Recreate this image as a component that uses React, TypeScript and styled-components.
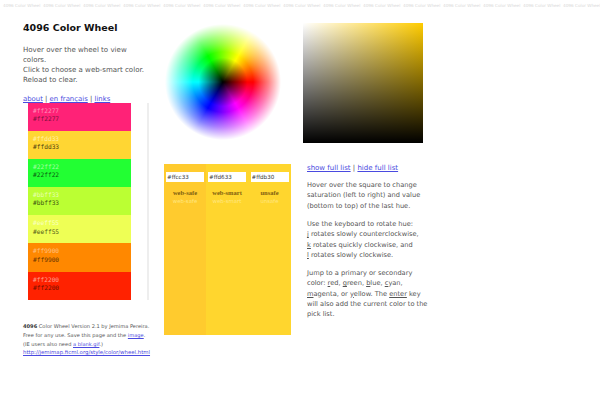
import styled, {createGlobalStyle} from 'styled-components';

const GlobalStyle = createGlobalStyle`
  html, body {
    margin: 0;
    padding: 0;
    background: #fff;
    font-family: 'DejaVu Sans', Verdana, sans-serif;
    color: #555;
  }
`;

const swatches = [
  {hex: '#ff2277', bg: '#ff2277', light: '#ff8fbb', dark: '#7a0f3a'},
  {hex: '#ffdd33', bg: '#ffd633', light: '#fff0a8', dark: '#4d4010'},
  {hex: '#22ff22', bg: '#22ff33', light: '#a0ffa0', dark: '#0a5c10'},
  {hex: '#bbff33', bg: '#bbff33', light: '#e8ffb0', dark: '#3a5510'},
  {hex: '#eeff55', bg: '#eeff55', light: '#f9ffc0', dark: '#55601a'},
  {hex: '#ff9900', bg: '#ff8800', light: '#ffc080', dark: '#663300'},
  {hex: '#ff2200', bg: '#ff2200', light: '#ffa090', dark: '#701000'},
];

const picks = [
  {value: '#ffcc33', title: 'web-safe', sub: 'web-safe', bg: '#ffcb2e', width: 42},
  {value: '#ffd633', title: 'web-smart', sub: 'web-smart', bg: '#ffd62e', width: 42},
  {value: '#ffdb30', title: 'unsafe', sub: 'unsafe', bg: '#ffd62e', width: 43},
];

const App = () => {
  return (
    <>
      <GlobalStyle />
      <Page>
        <Strip>
          {Array.from({length: 15}).map((_, i) => (
            <StripItem key={i}>4096 Color Wheel</StripItem>
          ))}
        </Strip>
        <Columns>
          <LeftCol>
            <Title>4096 Color Wheel</Title>
            <Intro>
              Hover over the wheel to view colors.
              <br />
              Click to choose a web-smart color.
              <br />
              Reload to clear.
            </Intro>
            <NavLinks>
              <a href="#a">about</a> | <a href="#b">en français</a> | <a href="#c">links</a>
            </NavLinks>
            <SwatchRow>
              <SwatchList>
                {swatches.map(s => (
                  <Swatch key={s.hex} $bg={s.bg}>
                    <SwatchText $color={s.light}>{s.hex}</SwatchText>
                    <SwatchText $color={s.dark}>{s.hex}</SwatchText>
                  </Swatch>
                ))}
              </SwatchList>
              <Rule />
            </SwatchRow>
            <Credits>
              <strong>4096</strong> Color Wheel Version 2.1 by Jemima Pereira.
              <br />
              Free for any use. Save this page and the <a href="#d">image</a>.
              <br />
              (IE users also need <a href="#e">a blank.gif</a>.)
              <br />
              <UrlLink href="#f">http://jemimap.ficml.org/style/color/wheel.html</UrlLink>
            </Credits>
          </LeftCol>
          <MiddleCol>
            <Wheel />
            <PickPanel>
              {picks.map(p => (
                <PickColumn key={p.value} $bg={p.bg} $width={p.width}>
                  <PickInput readOnly value={p.value} />
                  <PickTitle>{p.title}</PickTitle>
                  <PickSub>{p.sub}</PickSub>
                </PickColumn>
              ))}
            </PickPanel>
          </MiddleCol>
          <RightCol>
            <SatSquare />
            <Notes>
              <NoteLinks>
                <a href="#g">show full list</a> | <a href="#h">hide full list</a>
              </NoteLinks>
              <p>
                Hover over the square to change saturation (left to right) and value
                (bottom to top) of the last hue.
              </p>
              <p>
                Use the keyboard to rotate hue:
                <br />
                <u>j</u> rotates slowly counterclockwise,
                <br />
                <u>k</u> rotates quickly clockwise, and
                <br />
                <u>l</u> rotates slowly clockwise.
              </p>
              <p>
                Jump to a primary or secondary
                <br />
                color: <u>r</u>ed, <u>g</u>reen, <u>b</u>lue, <u>c</u>yan,
                <br />
                <u>m</u>agenta, or <u>y</u>ellow. The <u>enter</u> key
                <br />
                will also add the current color to the
                <br />
                pick list.
              </p>
            </Notes>
          </RightCol>
        </Columns>
      </Page>
    </>
  );
};

const Page = styled.div`
  width: 600px;
  height: 415px;
  overflow: hidden;
`;
const Strip = styled.div`
  display: flex;
  padding: 3px 0 0 3px;
  height: 9px;
  overflow: hidden;
  white-space: nowrap;
  font-size: 4.2px;
  line-height: 5px;
  color: #d8d8d8;
`;
const StripItem = styled.span`
  flex: none;
  width: 40px;
`;
const Columns = styled.div`
  display: flex;
  align-items: flex-start;
`;
const LeftCol = styled.div`
  width: 141px;
  margin-left: 23px;
  padding-top: 9px;
  flex: none;
  a {
    color: #4a4ae0;
  }
`;
const Title = styled.h1`
  margin: 0;
  font-size: 9.5px;
  line-height: 14px;
  font-weight: 700;
  color: #111;
`;
const Intro = styled.p`
  margin: 10px 0 0;
  width: 122px;
  font-size: 7.05px;
  line-height: 10px;
`;
const NavLinks = styled.div`
  margin-top: 9px;
  font-size: 6.9px;
  line-height: 10px;
`;
const SwatchRow = styled.div`
  display: flex;
  margin-left: 5px;
  margin-top: -1px;
`;
const SwatchList = styled.div`
  width: 103px;
  display: flex;
  flex-direction: column;
`;
const Swatch = styled.div<{$bg: string}>`
  height: 28.1px;
  box-sizing: border-box;
  padding: 4px 5px 0;
  background: ${p => p.$bg};
`;
const SwatchText = styled.div<{$color: string}>`
  font-family: 'DejaVu Sans Mono', monospace;
  font-size: 6.2px;
  line-height: 8.2px;
  color: ${p => p.$color};
`;
const Rule = styled.div`
  width: 2px;
  margin-left: 16px;
  background: #eee;
`;
const Credits = styled.div`
  margin-top: 22.7px;
  font-size: 5.1px;
  line-height: 8.7px;
  white-space: nowrap;
  strong {
    color: #333;
  }
`;
const UrlLink = styled.a`
  font-size: 5.4px;
`;
const MiddleCol = styled.div`
  width: 139px;
  flex: none;
`;
const Wheel = styled.div`
  width: 116px;
  height: 116px;
  margin: 12px 0 0 1px;
  border-radius: 50%;
  background:
    radial-gradient(closest-side, #000 0%, rgba(0, 0, 0, 0.6) 16%, rgba(0, 0, 0, 0) 42%, rgba(255, 255, 255, 0) 52%, rgba(255, 255, 255, 0.5) 78%, #fff 100%),
    conic-gradient(from 90deg, #f00, #f0f, #00f, #0ff, #0f0, #ff0, #f00);
`;
const PickPanel = styled.div`
  display: flex;
  margin: 24px 0 0 0;
  width: 127px;
  height: 171px;
`;
const PickColumn = styled.div<{$bg: string; $width: number}>`
  width: ${p => p.$width}px;
  background: ${p => p.$bg};
  display: flex;
  flex-direction: column;
  align-items: center;
  padding-top: 8px;
  text-align: center;
`;
const PickInput = styled.input`
  box-sizing: border-box;
  width: 38px;
  height: 10px;
  padding: 0 1px;
  border: 0;
  outline: none;
  background: #fff;
  font-family: 'DejaVu Sans', sans-serif;
  font-size: 5.6px;
  color: #333;
`;
const PickTitle = styled.div`
  margin-top: 7px;
  font-family: 'Liberation Serif', serif;
  font-size: 6.5px;
  line-height: 8px;
  font-weight: 700;
  color: #806010;
`;
const PickSub = styled.div`
  font-size: 5.4px;
  line-height: 8px;
  color: #ffe680;
`;
const RightCol = styled.div`
  width: 135px;
  flex: none;
`;
const SatSquare = styled.div`
  width: 120px;
  height: 120px;
  margin-top: 11px;
  background:
    linear-gradient(to bottom, rgba(0, 0, 0, 0), #000),
    linear-gradient(to right, #fff, #ffcc00);
`;
const Notes = styled.div`
  margin: 20px 0 0 4px;
  width: 127px;
  font-size: 6.65px;
  line-height: 10.2px;
  p {
    margin: 0 0 8.3px;
  }
  a {
    color: #4a4ae0;
  }
`;
const NoteLinks = styled.div`
  margin-bottom: 7px;
  font-size: 7px;
`;

export default App;
